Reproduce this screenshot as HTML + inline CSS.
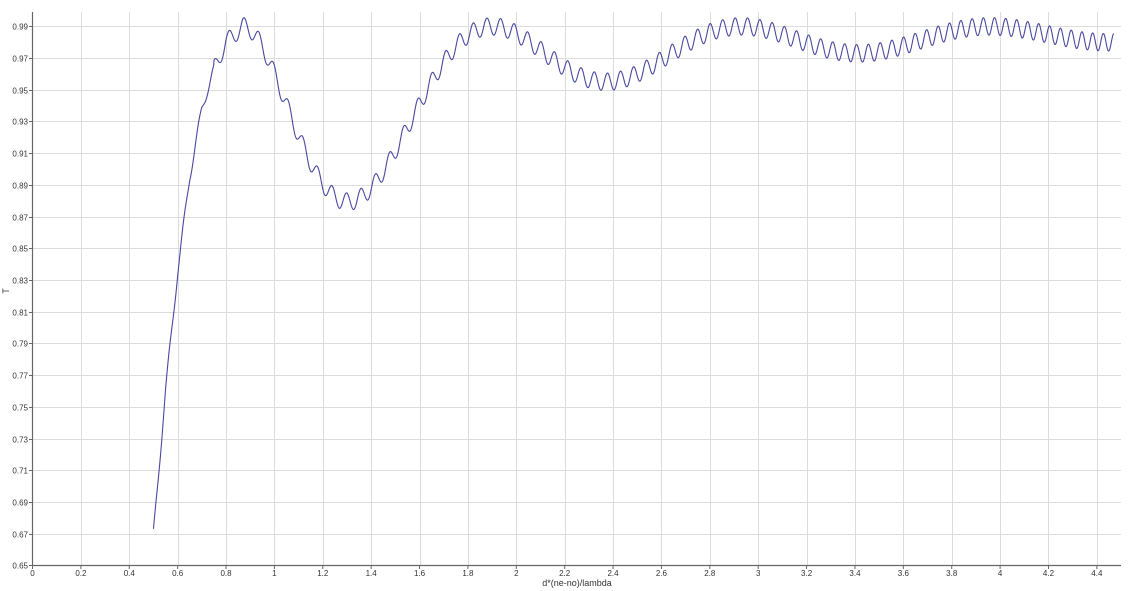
<!DOCTYPE html>
<html><head><style>
html,body{margin:0;padding:0;background:#fff;width:1133px;height:591px;overflow:hidden}
svg{display:block;font-family:"Liberation Sans",sans-serif}
</style></head><body>
<svg id="s" width="1133" height="591" viewBox="0 0 1133 591">
<g id="grid" stroke="#dcdcdc" stroke-width="1"></g>
<g id="lab" font-size="8" fill="#333"></g>
<line x1="32.5" y1="12" x2="32.5" y2="566" stroke="#666" stroke-width="1.2"/>
<line x1="32" y1="565.5" x2="1121" y2="565.5" stroke="#666" stroke-width="1.2"/>
<text x="577" y="586" font-size="9" fill="#333" text-anchor="middle">d*(ne-no)/lambda</text>
<text x="9" y="291" font-size="9" fill="#333" text-anchor="middle" transform="rotate(-90 9 291)">T</text>
<path id="c" fill="none" stroke="#4848a0" stroke-width="1.1"/>
</svg>
<script>
var X0=32.5,SX=241.9,Y0=565.3,SY=1585;
function px(x){return X0+x*SX} function py(t){return Y0-(t-0.65)*SY}
var g=document.getElementById('grid'),l=document.getElementById('lab'),ns='http://www.w3.org/2000/svg';
function el(p,tag,a,txt){var e=document.createElementNS(ns,tag);for(var k in a)e.setAttribute(k,a[k]);if(txt)e.textContent=txt;p.appendChild(e);}
for(var i=1;i<=22;i++){var x=Math.round(px(i*0.2))+0.5;el(g,'line',{x1:x,y1:12,x2:x,y2:565});}
for(var i=0;i<=22;i++){var v=Math.round(i*2)/10;var x=px(i*0.2);el(l,'line',{x1:x,y1:565,x2:x,y2:569,stroke:'#666'});el(l,'text',{x:x,y:576,'text-anchor':'middle'},String(v));}
for(var i=0;i<=17;i++){var t=0.65+i*0.02;var y=Math.round(py(t))+0.5;if(i>0)el(g,'line',{x1:33,y1:y,x2:1121,y2:y});el(l,'line',{x1:29,y1:y,x2:33,y2:y,stroke:'#666'});el(l,'text',{x:28,y:y+3,'text-anchor':'end'},t.toFixed(2));}
var pts=[[0.5,0.670],[0.55,0.76],[0.6,0.835],[0.65,0.895],[0.7,0.938],[0.75,0.963],[0.8,0.98],[0.87,0.99]];
function slow(x){if(x<0.87){for(var i=0;i<pts.length-1;i++){if(x<=pts[i+1][0]){var a=pts[i],b=pts[i+1],f=(x-a[0])/(b[0]-a[0]);return a[1]+f*(b[1]-a[1]);}}}
var d=0.2/(x*x);return 0.99-d*(1-Math.cos(2*Math.PI*(x-0.87)/1.03))/2;}
var ph=0,d="",dx=0.001;
for(var x=0.5;x<=4.47;x+=dx){var p=0.066-0.005*x;ph+=2*Math.PI/p*dx;var amp=x<0.75?0.003:0.0055;var t=slow(x)+amp*Math.cos(ph);d+=(d?"L":"M")+px(x).toFixed(2)+" "+py(t).toFixed(2);}
document.getElementById('c').setAttribute('d',d);
</script>
</body></html>
